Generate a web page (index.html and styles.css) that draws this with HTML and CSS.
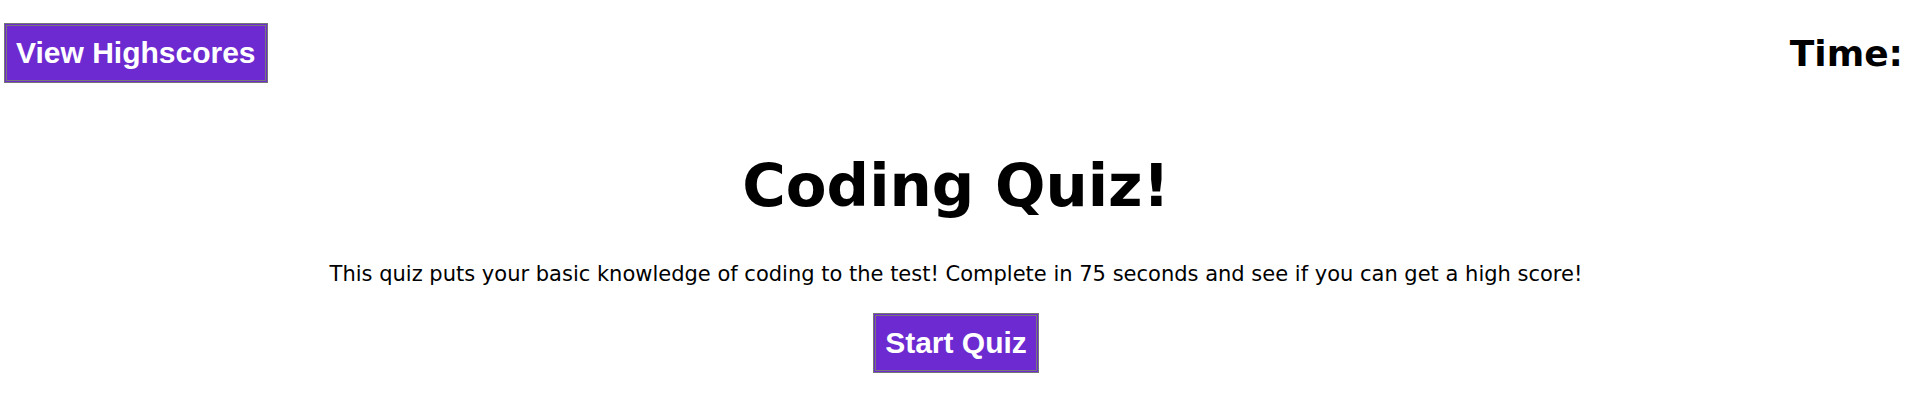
FILE: index.html
```html
<!DOCTYPE html>
<html lang="en">
<head>
<meta charset="utf-8">
<title>Coding Quiz</title>
<link rel="stylesheet" href="styles.css">
</head>
<body>
<header class="top-bar">
  <button class="btn">View Highscores</button>
  <h2 class="timer">Time:</h2>
</header>
<main class="intro">
  <h1 class="title">Coding Quiz!</h1>
  <p class="lead">This quiz puts your basic knowledge of coding to the test! Complete in 75 seconds and see if you can get a high score!</p>
  <button class="btn">Start Quiz</button>
</main>
</body>
</html>
```
FILE: styles.css
```css
html, body {
  margin: 0;
  padding: 0;
  background: #ffffff;
  color: #000000;
  font-family: "DejaVu Sans", Verdana, sans-serif;
}

.top-bar {
  display: flex;
  justify-content: space-between;
  align-items: center;
  padding: 23px 9px 0 4px;
}

.btn {
  font-family: "Liberation Sans", Arial, sans-serif;
  font-weight: bold;
  font-size: 30px;
  color: #ffffff;
  background: #6d2ad0;
  border: 3px double #767676;
  padding: 9px 9px;
  line-height: 36px;
  margin: 0;
  cursor: pointer;
}

.timer {
  margin: 0;
  font-size: 36px;
  font-weight: bold;
}

.intro {
  display: flex;
  flex-direction: column;
  align-items: center;
  text-align: center;
}

.title {
  margin: 68px 0 0;
  font-size: 59.4px;
  font-weight: bold;
}

.lead {
  margin: 42px 0 0;
  font-size: 21px;
}

.intro .btn {
  margin-top: 27px;
}
```
